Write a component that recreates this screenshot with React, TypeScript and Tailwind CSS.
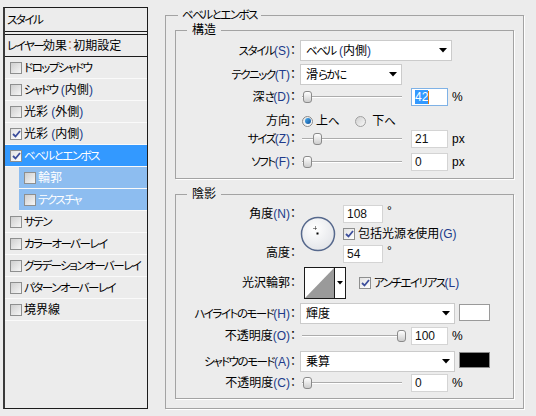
import React from 'react';

const FONT = "font-['Liberation_Sans','Noto_Sans_CJK_JP',sans-serif] [font-feature-settings:'palt']";

type Item = { label: string; checked?: boolean; selected?: boolean; sub?: boolean };

const ITEMS: Item[] = [
  { label: 'ドロップシャドウ' },
  { label: 'シャドウ (内側)' },
  { label: '光彩 (外側)' },
  { label: '光彩 (内側)', checked: true },
  { label: 'ベベルとエンボス', checked: true, selected: true },
  { label: '輪郭', sub: true },
  { label: 'テクスチャ', sub: true },
  { label: 'サテン' },
  { label: 'カラーオーバーレイ' },
  { label: 'グラデーションオーバーレイ' },
  { label: 'パターンオーバーレイ' },
  { label: '境界線' },
];

// ascii parts (parens, access keys) are drawn a little blue, like the cleartype text;
// kana runs are squeezed, the old UI font has narrow kana
function Label({ text, light }: { text: string; light?: boolean }) {
  const parts = text.split(/([()A-Z]+|[\u3040-\u30ff]+)/);
  return (
    <>
      {parts.map((p, i) =>
        /^[()A-Z]+$/.test(p) ? (
          <span key={i} className={light ? 'text-white' : 'text-[#203a8a]'}>
            {p}
          </span>
        ) : /^[\u3040-\u30ff]+$/.test(p) ? (
          <span key={i} className="text-[11.5px] tracking-[-1.5px]">
            {p}
          </span>
        ) : (
          <span key={i}>{p}</span>
        )
      )}
    </>
  );
}

function Check({ checked }: { checked?: boolean }) {
  return (
    <span
      className={
        checked
          ? 'w-[12px] h-[12px] shrink-0 border border-[#8e8f8f] bg-gradient-to-br from-[#e2e2e2] to-white flex items-center justify-center'
          : 'w-[12px] h-[12px] shrink-0 border border-[#8e8f8f] bg-gradient-to-br from-[#cfcfcf] to-[#f6f6f6] flex items-center justify-center'
      }
    >
      {checked && (
        <svg width="9" height="8" viewBox="0 0 9 8">
          <path d="M1 4 L3.5 6.5 L8 1" fill="none" stroke="#3c4e9c" strokeWidth="1.8" />
        </svg>
      )}
    </span>
  );
}

function Arrow() {
  return (
    <svg width="8" height="5" viewBox="0 0 8 5">
      <path d="M0 0 H8 L4 4.5 Z" fill="#000" />
    </svg>
  );
}

function Select({ value, className }: { value: string; className: string }) {
  return (
    <div className={`${className} h-[21px] shrink-0 bg-white border border-[#cbcbcb] flex items-center justify-between pl-[5px] pr-[4px]`}>
      <span>
        <Label text={value} />
      </span>
      <Arrow />
    </div>
  );
}

function Slider({ left }: { left: number }) {
  return (
    <div className="relative ml-[2px] w-[100px] h-[14px] shrink-0">
      <div className="absolute left-0 right-0 top-[6px] h-[2px] border-t border-[#acacac] bg-white" />
      <div
        className="absolute top-[1px] w-[9px] h-[12px] rounded-[3px] border border-[#8a8a8a] bg-gradient-to-b from-white to-[#cdcdcd]"
        style={{ left }}
      />
    </div>
  );
}

function Num({ value, focus, className }: { value: string; focus?: boolean; className?: string }) {
  return (
    <div
      className={`${className ?? 'ml-[9px] w-[37px]'} h-[18px] shrink-0 bg-white border ${
        focus ? 'border-[#7fb2e6]' : 'border-[#d4d4d4]'
      } flex items-center pl-[3px] text-[12px] text-[#111]`}
    >
      {focus ? (
        <>
          <span className="bg-[#3399ff] text-white">{value}</span>
          <span className="w-[1px] h-[13px] bg-[#e07a10]" />
        </>
      ) : (
        value
      )}
    </div>
  );
}

function Row({ label, className, children }: { label: string; className: string; children?: React.ReactNode }) {
  return (
    <div className={`${className} flex items-center`}>
      <div className="w-[120px] shrink-0 text-right whitespace-nowrap">
        <Label text={label} />
      </div>
      <div className="ml-[4px] flex items-center">{children}</div>
    </div>
  );
}

function LeftPanel() {
  return (
    <div className="w-[145px] h-[402px] shrink-0 border border-[#1c1c1c] border-l-2 border-l-[#3a3a3a]">
      <div className="h-[24px] border-b border-[#1c1c1c] pl-[2px] flex items-center">
        <Label text="スタイル" />
      </div>
      <div className="mt-[2px] h-[23px] border-t border-b border-[#1c1c1c] pl-[2px] flex items-center whitespace-nowrap">
        <Label text="レイヤー効果" />
        <span className="text-[#c97a12]">：</span>初期設定
      </div>
      {ITEMS.map((it) => (
        <div
          key={it.label}
          className={
            it.sub
              ? 'ml-[14px] h-[22px] border-b border-[#fafafa] bg-[#8dbdf0] text-white flex items-center gap-[2px] pl-[5px]'
              : it.selected
              ? 'h-[22px] border-b border-[#fafafa] bg-[#3399ff] text-white flex items-center gap-[2px] pl-[5px]'
              : 'h-[22px] border-b border-[#fafafa] flex items-center gap-[2px] pl-[5px]'
          }
        >
          <Check checked={it.checked} />
          <span className="whitespace-nowrap">
            <Label text={it.label} light={it.selected || it.sub} />
          </span>
        </div>
      ))}
    </div>
  );
}

function AngleDial() {
  return (
    <svg width="36" height="36" viewBox="0 0 36 36" className="ml-[4px] shrink-0">
      <defs>
        <radialGradient id="dial" cx="40%" cy="35%" r="70%">
          <stop offset="0%" stopColor="#ffffff" />
          <stop offset="100%" stopColor="#e2e4e8" />
        </radialGradient>
      </defs>
      <circle cx="18" cy="18" r="16.5" fill="url(#dial)" stroke="#56688c" strokeWidth="1.5" />
      <path d="M15.5 10.5v4M13.5 12.5h4" stroke="#222" strokeWidth="1" strokeDasharray="1 1" />
      <rect x="16.5" y="16.5" width="2" height="2" fill="#000" />
    </svg>
  );
}

function ContourThumb() {
  return (
    <div className="ml-[4px] w-[42px] h-[32px] shrink-0 border border-[#1a1a1a] bg-white flex">
      <svg width="29" height="30" viewBox="0 0 29 30">
        <path d="M0 30 L29 0 L29 30 Z" fill="#9a9a9a" />
      </svg>
      <div className="flex-1 border-l border-[#1a1a1a] flex items-center justify-center">
        <svg width="6" height="4" viewBox="0 0 6 4">
          <path d="M0 0 H6 L3 3.5 Z" fill="#000" />
        </svg>
      </div>
    </div>
  );
}

const GROUP = 'border border-[#a3a3a3] shadow-[1px_1px_0_#ffffff]';

export default function App() {
  return (
    <div className={`${FONT} w-[536px] h-[416px] bg-[#ececec] text-[12px] leading-[14px] text-black flex items-start pt-[7px] pl-[3px]`}>
      <LeftPanel />

      <fieldset className={`${GROUP} ml-[17px] mt-[1px] w-[359px] h-[401px] shrink-0 px-[9px] pt-[1px]`}>
        <legend className="ml-[3px] px-[4px] leading-[14px]">
          <Label text="ベベルとエンボス" />
        </legend>

        <fieldset className={`${GROUP} pb-[7px]`}>
          <legend className="ml-[11px] px-[5px] leading-[14px]">構造</legend>
          <Row label="スタイル(S)：" className="mt-[3px] h-[21px]">
            <Select value="ベベル (内側)" className="w-[152px]" />
          </Row>
          <Row label="テクニック(T)：" className="mt-[3px] h-[21px]">
            <Select value="滑らかに" className="w-[102px]" />
          </Row>
          <Row label="深さ(D)：" className="mt-[3px] h-[18px]">
            <Slider left={1} />
            <Num value="42" focus />
            <span className="ml-[4px]">%</span>
          </Row>
          <Row label="方向：" className="mt-[7px] h-[16px]">
            <span className="ml-[2px] w-[11px] h-[11px] rounded-full border border-[#8a8a8a] bg-gradient-to-br from-[#e6e6e6] to-white flex items-center justify-center">
              <span className="w-[6px] h-[6px] rounded-full bg-gradient-to-br from-[#4fb0f0] to-[#0b4f9a]" />
            </span>
            <span className="ml-[3px]">
              <Label text="上へ" />
            </span>
            <span className="ml-[17px] w-[11px] h-[11px] rounded-full border border-[#a0a0a0] bg-gradient-to-br from-[#d0d0d0] to-[#f8f8f8]" />
            <span className="ml-[6px]">
              <Label text="下へ" />
            </span>
          </Row>
          <Row label="サイズ(Z)：" className="mt-[1px] h-[18px]">
            <Slider left={11} />
            <Num value="21" />
            <span className="ml-[4px]">px</span>
          </Row>
          <Row label="ソフト(F)：" className="mt-[5px] h-[18px]">
            <Slider left={1} />
            <Num value="0" />
            <span className="ml-[4px]">px</span>
          </Row>
        </fieldset>

        <fieldset className={`${GROUP} mt-[8px] pb-[6px]`}>
          <legend className="ml-[11px] px-[5px] leading-[14px]">陰影</legend>

          <div className="mt-[3px] h-[60px] flex items-center">
            <div className="w-[120px] h-full shrink-0 flex flex-col justify-between text-right py-[3px]">
              <span>
                <Label text="角度(N)：" />
              </span>
              <span className="mb-[1px]">高度：</span>
            </div>
            <AngleDial />
            <div className="ml-[7px] h-full flex flex-col justify-between">
              <div className="h-[20px] flex items-center">
                <Num value="108" className="w-[40px]" />
                <span className="ml-[4px] self-start">°</span>
              </div>
              <div className="h-[20px] flex items-center">
                <Check checked />
                <span className="ml-[3px]">
                  <Label text="包括光源を使用(G)" />
                </span>
              </div>
              <div className="h-[20px] flex items-center">
                <Num value="54" className="w-[40px]" />
                <span className="ml-[4px] self-start">°</span>
              </div>
            </div>
          </div>

          <Row label="光沢輪郭：" className="mt-[3px] h-[32px]">
            <ContourThumb />
            <span className="ml-[13px]">
              <Check checked />
            </span>
            <span className="ml-[3px]">
              <Label text="アンチエイリアス(L)" />
            </span>
          </Row>
          <Row label="ハイライトのモード(H)：" className="mt-[4px] h-[21px]">
            <Select value="輝度" className="w-[155px]" />
            <span className="ml-[4px] mb-[3px] w-[31px] h-[17px] bg-white border border-[#9a9a9a]" />
          </Row>
          <Row label="不透明度(O)：" className="mt-[3px] h-[18px]">
            <Slider left={95} />
            <Num value="100" />
            <span className="ml-[4px]">%</span>
          </Row>
          <Row label="シャドウのモード(A)：" className="mt-[6px] h-[21px]">
            <Select value="乗算" className="w-[155px]" />
            <span className="ml-[4px] mb-[3px] w-[31px] h-[16px] bg-black border border-[#8a8a8a]" />
          </Row>
          <Row label="不透明度(C)：" className="mt-[2px] h-[18px]">
            <Slider left={1} />
            <Num value="0" />
            <span className="ml-[4px]">%</span>
          </Row>
        </fieldset>
      </fieldset>
    </div>
  );
}
